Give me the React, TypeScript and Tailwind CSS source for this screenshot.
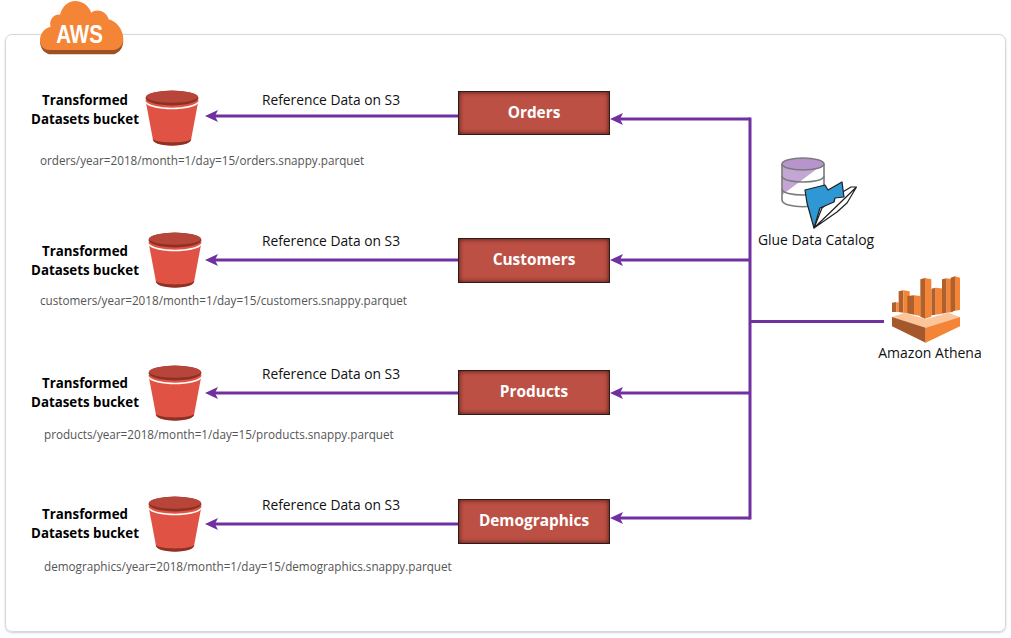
const font = "font-['Open_Sans','Noto_Sans',sans-serif]";

const rows = [
  {
    name: "Orders",
    path: "orders/year=2018/month=1/day=15/orders.snappy.parquet",
    label: "left-[20px] top-[91px]",
    bucket: "left-[145px] top-[90px]",
    ref: "top-[91px]",
    box: "top-[91px] h-[44px]",
    file: "left-[40px] top-[152px]",
  },
  {
    name: "Customers",
    path: "customers/year=2018/month=1/day=15/customers.snappy.parquet",
    label: "left-[20px] top-[242px]",
    bucket: "left-[148px] top-[232px]",
    ref: "top-[232px]",
    box: "top-[238px] h-[45px]",
    file: "left-[40px] top-[292px]",
  },
  {
    name: "Products",
    path: "products/year=2018/month=1/day=15/products.snappy.parquet",
    label: "left-[20px] top-[374px]",
    bucket: "left-[148px] top-[365px]",
    ref: "top-[365px]",
    box: "top-[370px] h-[45px]",
    file: "left-[44px] top-[426px]",
  },
  {
    name: "Demographics",
    path: "demographics/year=2018/month=1/day=15/demographics.snappy.parquet",
    label: "left-[20px] top-[505px]",
    bucket: "left-[148px] top-[496px]",
    ref: "top-[496px]",
    box: "top-[499px] h-[45px]",
    file: "left-[44px] top-[558px]",
  },
];

function Bucket({ className }: { className: string }) {
  return (
    <svg className={`absolute ${className}`} width="54" height="56" viewBox="0 0 54 56">
      <path d="M0.5 10 L8 50 C10 57 44 57 46 50 L53.5 10 Z" fill="#e05243" />
      <path d="M7.8 49 L8 50 C10 57.5 44 57.5 46 50 L46.2 49 C43 53.5 11 53.5 7.8 49 Z" fill="#8c3123" />
      <path d="M0.5 10.5 C3 20 51 20 53.5 10.5 L53.6 12.5 C50 21.5 4 21.5 0.4 12.5 Z" fill="#ffffff" />
      <ellipse cx="27" cy="8" rx="26.5" ry="7.4" fill="#8c3123" />
      <ellipse cx="27" cy="6.8" rx="26" ry="6" fill="#b8453a" />
    </svg>
  );
}

function AwsBadge() {
  return (
    <div className="absolute left-[38px] top-0 w-[90px] h-[58px]">
      <svg className="absolute inset-0" width="90" height="58" viewBox="0 0 270 174">
        <path
          d="M6 122 C6 145 20 163 40 163 L222 163 C240 163 256 145 256 122 Z"
          fill="#9d5025"
        />
        <path
          d="M35 150 C15 150 6 135 6 120 C6 100 20 84 38 80 C32 62 46 42 66 44 C72 20 90 3 112 3 C135 3 152 18 160 38 C175 25 205 32 212 58 C235 64 256 88 256 118 C256 138 240 150 225 150 Z"
          fill="#f58536"
        />
      </svg>
      <span className="absolute left-[-1px] w-[85px] top-[19px] text-center text-[25px] leading-[30px] font-bold font-['Liberation_Sans',sans-serif] text-white scale-x-[0.82]">
        AWS
      </span>
    </div>
  );
}

function GlueIcon() {
  return (
    <svg className="absolute left-[780px] top-[156px]" width="80" height="76" viewBox="0 0 80 76">
      <path d="M2 8 L2 44 C2 53 44 53 44 44 L44 8 Z" fill="#ffffff" />
      <path d="M2 8 L2 39 L38 12 L44 8 Z" fill="#c3a6d4" />
      <ellipse cx="23" cy="8" rx="21" ry="6" fill="#b795cc" stroke="#7b7b7b" strokeWidth="1.6" />
      <path d="M2 8 L2 44 C2 53 44 53 44 44 L44 8" fill="none" stroke="#7b7b7b" strokeWidth="1.6" />
      <path d="M2 20 C2 28 44 28 44 20 M2 33 C2 41 44 41 44 33" fill="none" stroke="#7b7b7b" strokeWidth="1.6" />
      <path d="M34 72 L76.5 31 L71 31 L56 40 L42 52 Z M34 72 L57 56 L67 47 L76.5 31 Z" fill="#ffffff" stroke="#1f1f1f" strokeWidth="1.2" strokeLinejoin="round" />
      <path d="M25 34 L45 29 L48 34 L62 26 L64 41 L55 42 L54 46 L40 52 L34 72 L27 47 Z" fill="#2f97d3" stroke="#1f1f1f" strokeWidth="1.2" strokeLinejoin="round" />
    </svg>
  );
}

const athenaBars = [
  { dark: "12,92 25,90 25,120 12,120", lit: "25,90 32,92 32,120 25,120" },
  { dark: "32,58 46,55 46,122 32,120", lit: "46,55 65,58 65,124 46,122" },
  { dark: "58,72 78,70 78,128 58,124", lit: "78,70 97,72 97,132 78,128" },
  { dark: "130,50 143,47 143,128 130,130", lit: "143,47 170,50 170,124 143,128" },
  { dark: "162,22 176,19 176,122 162,124", lit: "176,19 195,22 195,120 176,122" },
  { dark: "188,17 201,13 201,116 188,120", lit: "201,13 216,17 216,114 201,116" },
  { dark: "97,22 111,18 111,140 97,134", lit: "111,18 130,22 130,134 111,140" },
];

function AthenaIcon() {
  return (
    <svg className="absolute left-[888px] top-[272px]" width="76" height="72" viewBox="0 0 228 216">
      <path d="M12 135 L50 122 L113 142 L180 122 L216 135 L113 167 Z" fill="#fcc59a" />
      {athenaBars.map((b) => (
        <g key={b.dark}>
          <polygon points={b.dark} fill="#b0602c" />
          <polygon points={b.lit} fill="#f58536" />
        </g>
      ))}
      <path d="M12 135 L113 167 L113 212 L12 163 Z" fill="#a5582b" />
      <path d="M113 167 L216 135 L216 163 L113 212 Z" fill="#f58536" />
    </svg>
  );
}

// connector lines between the nodes of the diagram
function Connectors() {
  const purple = "#7030a0";
  const heads = [
    [205, 116],
    [205, 260],
    [205, 393],
    [205, 524],
    [610, 119],
    [610, 260],
    [610, 393],
    [610, 518],
  ];
  return (
    <svg className="absolute inset-0" width="1011" height="638">
      <g stroke={purple} strokeWidth="3" fill="none">
        <path d="M212 116 H458 M212 260 H458 M212 393 H458 M212 524 H458" />
        <path d="M616 119 H750 M616 260 H750 M616 393 H750 M616 518 H750" />
        <path d="M750 117.5 V519.5 M750 321.5 H884" />
      </g>
      {heads.map(([x, y]) => (
        <path key={`${x}-${y}`} d={`M${x} ${y} L${x + 13} ${y - 6} L${x + 10} ${y} L${x + 13} ${y + 6} Z`} fill={purple} />
      ))}
    </svg>
  );
}

export default function App() {
  return (
    <div className={`relative w-[1011px] h-[638px] bg-white overflow-hidden ${font}`}>
      <div className="absolute left-[5px] top-[34px] w-[1001px] h-[598px] rounded-[7px] border border-[#d5d8dc] shadow-[0_1px_2px_rgba(120,140,160,0.4)]" />
      <Connectors />
      <AwsBadge />

      {rows.map((r) => (
        <div key={r.name}>
          <div className={`absolute w-[130px] text-center text-[13.3px] leading-[19px] font-bold text-black ${r.label}`}>
            <div>Transformed</div>
            <div>Datasets bucket</div>
          </div>
          <Bucket className={r.bucket} />
          <div className={`absolute left-[231px] w-[200px] text-center text-[13.8px] leading-[18px] text-[#111] ${r.ref}`}>
            Reference Data on S3
          </div>
          <div
            className={`absolute left-[458px] w-[152px] flex items-center justify-center pb-[1px] bg-[#bd5044] border border-[#2e1c1a] shadow-[inset_0_0_5px_rgba(50,10,10,0.85)] text-white font-bold text-[15.4px] ${r.box}`}
          >
            {r.name}
          </div>
          <div className={`absolute whitespace-nowrap text-[11.7px] leading-[16px] text-[#555] ${r.file}`}>{r.path}</div>
        </div>
      ))}

      <GlueIcon />
      <div className="absolute left-[756px] top-[231px] w-[120px] text-center text-[13.9px] leading-[18px] text-[#111]">Glue Data Catalog</div>
      <AthenaIcon />
      <div className="absolute left-[870px] top-[344px] w-[120px] text-center text-[14px] leading-[18px] text-[#111]">Amazon Athena</div>
    </div>
  );
}
